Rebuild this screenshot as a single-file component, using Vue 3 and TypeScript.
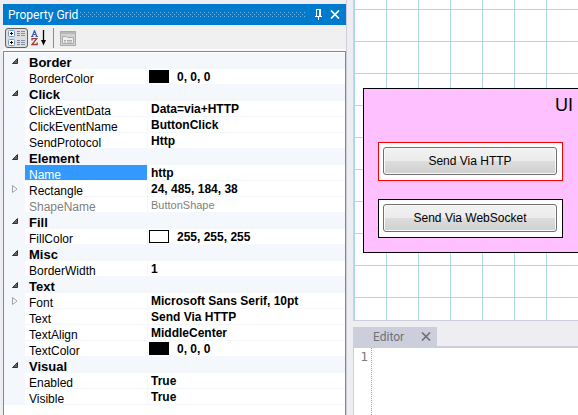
<script setup lang="ts">
import { ref } from 'vue'

interface Property {
  name: string
  value: string
  swatch?: string
  expandable?: boolean
  selected?: boolean
  readonly?: boolean
}

interface Category {
  title: string
  items: Property[]
}

const categories = ref<Category[]>([
  { title: 'Border', items: [{ name: 'BorderColor', value: '0, 0, 0', swatch: '#000000' }] },
  {
    title: 'Click',
    items: [
      { name: 'ClickEventData', value: 'Data=via+HTTP' },
      { name: 'ClickEventName', value: 'ButtonClick' },
      { name: 'SendProtocol', value: 'Http' },
    ],
  },
  {
    title: 'Element',
    items: [
      { name: 'Name', value: 'http', selected: true },
      { name: 'Rectangle', value: '24, 485, 184, 38', expandable: true },
      { name: 'ShapeName', value: 'ButtonShape', readonly: true },
    ],
  },
  { title: 'Fill', items: [{ name: 'FillColor', value: '255, 255, 255', swatch: '#ffffff' }] },
  { title: 'Misc', items: [{ name: 'BorderWidth', value: '1' }] },
  {
    title: 'Text',
    items: [
      { name: 'Font', value: 'Microsoft Sans Serif, 10pt', expandable: true },
      { name: 'Text', value: 'Send Via HTTP' },
      { name: 'TextAlign', value: 'MiddleCenter' },
      { name: 'TextColor', value: '0, 0, 0', swatch: '#000000' },
    ],
  },
  {
    title: 'Visual',
    items: [
      { name: 'Enabled', value: 'True' },
      { name: 'Visible', value: 'True' },
    ],
  },
])

const source = ref('')
</script>

<template>
  <main class="workspace">
    <section class="panel">
      <header class="panel-title">
        <h1>Property Grid</h1>
        <svg class="grip" height="5" shape-rendering="crispEdges" aria-hidden="true">
          <defs>
            <pattern id="grip-dots" width="4" height="4" patternUnits="userSpaceOnUse">
              <path d="M0 0h1v1H0zM2 2h1v1H2z" fill="#73b7e6" />
            </pattern>
          </defs>
          <rect width="100%" height="5" fill="url(#grip-dots)" />
        </svg>
        <button type="button" class="title-button" aria-label="Auto hide">
          <svg width="8" height="12" viewBox="0 0 8 12" shape-rendering="crispEdges">
            <path d="M1.5 7V.5h4V7M4.500 1v6M0 7.500h7M3.500 8v3" fill="none" stroke="#fff" />
          </svg>
        </button>
        <button type="button" class="title-button" aria-label="Close">
          <svg width="10" height="9" viewBox="0 0 10 9">
            <path d="M1 .5l8 8M9 .5l-8 8" fill="none" stroke="#fff" stroke-width="1.700" />
          </svg>
        </button>
      </header>

      <div class="toolbar">
        <button type="button" class="tool active" aria-label="Categorized">
          <svg width="18" height="17" viewBox="0 0 18 17">
            <g fill="#fff" stroke="#6f9bc9">
              <rect x=".5" y=".5" width="6" height="6" rx="1" />
              <rect x=".5" y="9.500" width="6" height="6" rx="1" />
            </g>
            <path d="M2 3.500h3M3.500 2v3M2 12.500h3M3.500 11v3" stroke="#111" />
            <path d="M9 1.500h3M9 3.500h3M9 5.500h3M9 10.500h3M9 12.500h3M9 14.500h3" stroke="#7b8899" />
            <path d="M13 1.500h4M13 3.500h4M13 5.500h4M13 10.500h4M13 12.500h4M13 14.500h4" stroke="#8194ac" />
          </svg>
        </button>
        <button type="button" class="tool" aria-label="Alphabetical">
          <svg width="16" height="16" viewBox="0 0 16 16">
            <path d="M1.200 6.500L3.500.5l2.300 6M2 4.500h3M0 6.500h2.500M4.500 6.500H7" fill="none" stroke="#3a5fb0" stroke-width="1.200" />
            <path d="M1 10.500V8.600h4.700L1 14.500h5.200v-2" fill="none" stroke="#a33a3a" stroke-width="1.300" />
            <path d="M12.500 0v12" stroke="#000" stroke-width="1.300" />
            <path d="M10 10h5l-2.500 5.500z" />
          </svg>
        </button>
        <span class="separator"></span>
        <button type="button" class="tool" aria-label="Property pages" disabled>
          <svg width="16" height="15" viewBox="0 0 16 15" fill="none" stroke="#aaa">
            <rect x=".5" y=".5" width="15" height="14" fill="#d2d2d2" />
            <path d="M1 2h14" stroke="#b8b8b8" stroke-width="2" />
            <path d="M2.500 12.500v-7h4l1 1h6v6z" fill="#eee" />
            <path d="M4 9.500h2M7 9.500h5M4 11h2M7 11h5" />
          </svg>
        </button>
      </div>

      <div class="grid-box">
        <table class="properties" aria-label="Properties">
          <colgroup>
            <col class="col-gutter" />
            <col class="col-name" />
            <col />
          </colgroup>
          <tbody v-for="category in categories" :key="category.title">
            <tr class="category">
              <td class="gutter">
                <button type="button" class="expander" aria-expanded="true" :aria-label="category.title">
                  <svg width="6" height="6" viewBox="0 0 6 6">
                    <path d="M5.500 .5v5h-5z" fill="#666" stroke="#333" />
                  </svg>
                </button>
              </td>
              <th colspan="2" scope="rowgroup">{{ category.title }}</th>
            </tr>
            <tr
              v-for="item in category.items"
              :key="item.name"
              :class="{ selected: item.selected, readonly: item.readonly }"
            >
              <td class="gutter">
                <button v-if="item.expandable" type="button" class="expander" aria-expanded="false" :aria-label="item.name">
                  <svg width="6" height="8" viewBox="0 0 6 8">
                    <path d="M.5 .5v7l4.500-3.500z" fill="#fff" stroke="#a0a0a0" />
                  </svg>
                </button>
              </td>
              <th scope="row" class="name">{{ item.name }}</th>
              <td class="value">
                <input v-if="item.selected" v-model="item.value" type="text" :aria-label="item.name" />
                <span v-else class="value-text">
                  <i v-if="item.swatch" class="swatch" :style="{ backgroundColor: item.swatch }"></i>{{ item.value }}
                </span>
              </td>
            </tr>
          </tbody>
        </table>
      </div>
    </section>

    <div class="documents">
      <section class="canvas">
        <div class="shape">
          <h2>UI</h2>
          <div class="frame picked"><button type="button">Send Via HTTP</button></div>
          <div class="frame"><button type="button">Send Via WebSocket</button></div>
        </div>
      </section>

      <section class="editor">
        <div class="tab">
          <span>Editor</span>
          <button type="button" aria-label="Close editor">
            <svg width="10" height="9" viewBox="0 0 10 9">
              <path d="M1 .5l8 8M9 .5l-8 8" fill="none" stroke="#717176" stroke-width="1.700" />
            </svg>
          </button>
        </div>
        <div class="code">
          <span class="line-number">1</span>
          <textarea v-model="source" aria-label="Source" spellcheck="false"></textarea>
        </div>
      </section>
    </div>
  </main>
</template>

<style>
body {
  background: #eeeef2;
}
</style>

<style scoped>
* {
  box-sizing: border-box;
}

button,
input,
textarea {
  margin: 0;
  padding: 0;
  border: 0;
  background: none;
  font: inherit;
  color: inherit;
}

svg {
  display: block;
}

.workspace {
  display: grid;
  grid-template-columns: 344px minmax(0, 1fr);
  column-gap: 6px;
  height: 100vh;
  padding-left: 3px;
  overflow: hidden;
  background: #eeeef2;
  font-family: "Liberation Sans", Arial, sans-serif;
  font-size: 12px;
  color: #000;
}

.panel {
  display: flex;
  flex-direction: column;
  min-height: 0;
  padding-top: 4px;
  border-right: 1px solid #cccedb;
}

.panel-title {
  display: flex;
  align-items: center;
  height: 21px;
  padding: 0 6px 0 5px;
  background: #007acc;
  color: #fff;
}

.panel-title h1 {
  margin: 0;
  font: 12px/20px Roboto, "Open Sans", sans-serif;
}

.grip {
  flex: 1;
  min-width: 0;
  margin: 0 10px 0 2px;
}

.title-button {
  display: grid;
  place-items: center;
  width: 8px;
  height: 16px;
}

.title-button + .title-button {
  width: 10px;
  margin-left: 7px;
}

.toolbar {
  display: flex;
  align-items: center;
  height: 26px;
  padding: 2px 2px 0;
  border-bottom: 2px solid #fafafa;
  background: #f0f0f0;
}

.tool {
  display: grid;
  place-items: center;
  width: 22px;
  height: 20px;
}

.tool.active {
  width: 23px;
  border: 1px solid #606060;
  border-radius: 3px;
  background: #dedede;
}

.separator {
  width: 1px;
  height: 20px;
  margin: 0 3px;
  background: #8c8c8c;
}

.grid-box {
  flex: 1;
  min-height: 0;
  padding-top: 1px;
  border: 1px solid #828790;
  border-bottom: 0;
  background: #fff;
  overflow: hidden;
}

.properties {
  width: 100%;
  table-layout: fixed;
  border-collapse: separate;
  border-spacing: 0;
}

.col-gutter {
  width: 21px;
}

.col-name {
  width: 123px;
}

.properties tr {
  height: 16px;
}

.properties th,
.properties td {
  height: 16px;
  padding: 0;
  border-bottom: 1px solid #f4f7fc;
  font-weight: normal;
  line-height: 15px;
  text-align: left;
  white-space: nowrap;
}

.properties .gutter,
.properties .category th {
  background: #f4f7fc;
}

.properties .category th {
  padding: 4px 0 0 4px;
  font-size: 13px;
  font-weight: bold;
  line-height: 11px;
}

.properties .name {
  padding: 6px 0 0 4px;
  line-height: 9px;
  border-right: 1px solid #f4f7fc;
}

.properties .value {
  padding-left: 3px;
  font-weight: bold;
}

.value-text {
  display: flex;
  align-items: center;
  height: 15px;
  padding-top: 2px;
  line-height: 13px;
}

.expander {
  display: grid;
  place-items: center;
  width: 6px;
  height: 8px;
  margin-left: 8px;
}

.properties .selected .name {
  background: #3399ff;
  color: #fff;
}

.properties input {
  display: block;
  width: 100%;
  height: 15px;
  padding-top: 2px;
  outline: 0;
}

.properties .readonly .name,
.properties .readonly .value {
  color: #808080;
  font-weight: normal;
}

.properties .readonly .value {
  font-size: 11px;
}

.swatch {
  width: 20px;
  height: 13px;
  margin: -2px 8px 0 -2px;
  border: 1px solid #000;
}

.documents {
  display: flex;
  flex-direction: column;
  min-width: 0;
}

.canvas {
  position: relative;
  flex: 0 0 321px;
  overflow: hidden;
  border-left: 1px solid #cccedb;
  border-bottom: 1px solid #cccedb;
  background:
    linear-gradient(90deg, #add8e6 1px, transparent 1px) 0 0 / 32px 32px,
    linear-gradient(#add8e6 1px, transparent 1px) 0 9px / 32px 32px,
    #fff;
}

.shape {
  position: absolute;
  top: 88px;
  left: 9px;
  display: flex;
  flex-direction: column;
  gap: 18px;
  width: 388px;
  padding: 4px 0 14px 14px;
  border: 1px solid #000;
  background: #ffc0ff;
}

.shape h2 {
  margin: 0 0 13px;
  font-size: 18px;
  font-weight: normal;
  line-height: 24px;
  text-align: center;
  height: 18px;
}

.frame {
  display: flex;
  width: 185px;
  height: 39px;
  padding: 4px 5px 5px 4px;
  border: 1px solid #000;
  background: #fff;
}

.frame.picked {
  border-color: #f00;
}

.frame button {
  flex: 1;
  border: 1px solid #707070;
  border-radius: 3px;
  background: linear-gradient(#f2f2f2, #ebebeb 50%, #dddddd 50%, #cfcfcf);
  box-shadow: inset 0 0 0 1px #fafafa;
  font-size: 12px;
}

.editor {
  display: flex;
  flex: 1;
  flex-direction: column;
  min-height: 0;
  padding-top: 6px;
}

.tab {
  display: flex;
  align-items: center;
  justify-content: space-between;
  align-self: flex-start;
  width: 84px;
  height: 19px;
  padding: 0 6px 0 20px;
  background: #cccedb;
  font: 12px/20px Roboto, "Open Sans", sans-serif;
  color: #717176;
}

.code {
  display: flex;
  flex: 1;
  min-height: 0;
  border-top: 2px solid #cccedb;
  border-left: 1px solid #cccedb;
  background: #fff;
  font: 13px/17px "DejaVu Sans Mono", monospace;
}

.line-number {
  width: 18px;
  padding-right: 3px;
  border-right: 1px dotted #a0a0a0;
  color: #808080;
  text-align: right;
}

.code textarea {
  flex: 1;
  min-width: 0;
  resize: none;
  outline: 0;
}
</style>
